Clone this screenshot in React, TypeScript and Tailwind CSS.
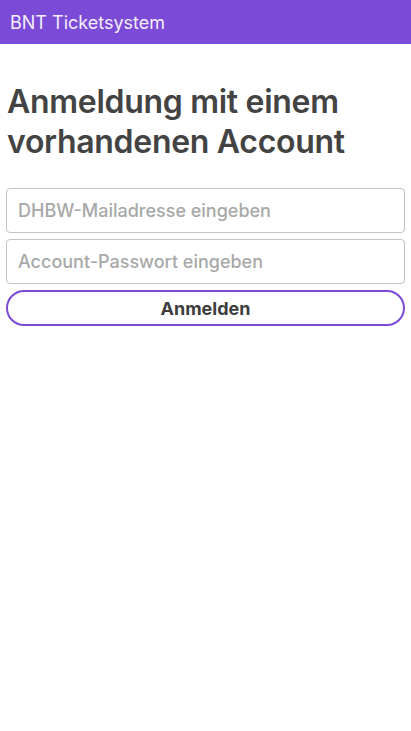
import React from "react";

export default function App() {
  return (
    <div className="min-h-[731px] bg-white" style={{ fontFamily: "Inter, 'Liberation Sans', sans-serif" }}>
      <header className="h-[44px] bg-[#7b4ad6] flex items-center px-[10px]">
        <span className="text-[18px] text-[#f3eefc]">BNT Ticketsystem</span>
      </header>
      <main className="px-[6px]">
        <h1 className="mt-[38px] px-[1px] text-[32px] leading-[40px] font-semibold text-[#434343] tracking-[-0.3px]">
          Anmeldung mit einem vorhandenen Account
        </h1>
        <div className="mt-[26px] flex flex-col gap-[6px]">
          <input
            className="h-[45px] w-full rounded-[4px] border border-[#c4c4c4] px-[11px] text-[18px] font-medium text-[#444] placeholder:text-[#a8a8a8] outline-none"
            placeholder="DHBW-Mailadresse eingeben"
          />
          <input
            type="password"
            className="h-[45px] w-full rounded-[4px] border border-[#c4c4c4] px-[11px] text-[18px] font-medium text-[#444] placeholder:text-[#a8a8a8] outline-none"
            placeholder="Account-Passwort eingeben"
          />
          <button className="h-[36px] w-full rounded-full border-2 border-[#7b4ad6] bg-white text-[18px] font-bold text-[#3d3d3d]">
            Anmelden
          </button>
        </div>
      </main>
    </div>
  );
}
